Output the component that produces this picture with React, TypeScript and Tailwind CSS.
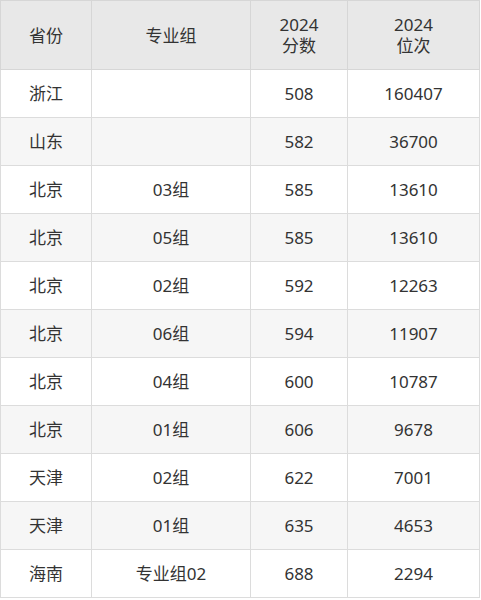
import React from "react";

const rows: [string, string, string, string][] = [
  ["浙江", "", "508", "160407"],
  ["山东", "", "582", "36700"],
  ["北京", "03组", "585", "13610"],
  ["北京", "05组", "585", "13610"],
  ["北京", "02组", "592", "12263"],
  ["北京", "06组", "594", "11907"],
  ["北京", "04组", "600", "10787"],
  ["北京", "01组", "606", "9678"],
  ["天津", "02组", "622", "7001"],
  ["天津", "01组", "635", "4653"],
  ["海南", "专业组02", "688", "2294"],
];

export default function App() {
  return (
    <div
      className="w-[481px] h-[600px] bg-white text-[#333333]"
      style={{ fontFamily: '"Noto Sans", "Noto Sans CJK SC", sans-serif' }}
    >
      <table className="border-collapse w-[479px] table-fixed text-[17px]">
        <colgroup>
          <col className="w-[91px]" />
          <col className="w-[159px]" />
          <col className="w-[97px]" />
          <col className="w-[132px]" />
        </colgroup>
        <thead>
          <tr className="bg-[#e8e8e8] h-[69px]">
            <th className="border border-[#d6d6d6] font-normal text-center leading-[21px] p-0">省份</th>
            <th className="border border-[#d6d6d6] font-normal text-center leading-[21px] p-0">专业组</th>
            <th className="border border-[#d6d6d6] font-normal text-center leading-[21px] p-0">
              <div>2024</div>
              <div>分数</div>
            </th>
            <th className="border border-[#d6d6d6] font-normal text-center leading-[21px] p-0">
              <div>2024</div>
              <div>位次</div>
            </th>
          </tr>
        </thead>
        <tbody>
          {rows.map((r, i) => (
            <tr key={i} className={i % 2 === 1 ? "bg-[#f6f6f6] h-[48px]" : "bg-white h-[48px]"}>
              {r.map((c, j) => (
                <td key={j} className="border border-[#dcdcdc] text-center p-0 leading-[20px]">
                  {c}
                </td>
              ))}
            </tr>
          ))}
        </tbody>
      </table>
    </div>
  );
}
